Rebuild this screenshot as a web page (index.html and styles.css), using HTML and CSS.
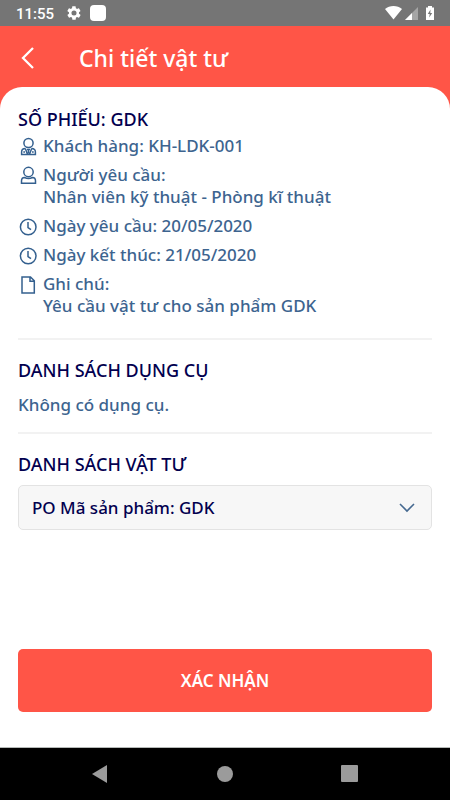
FILE: index.html
```html
<!DOCTYPE html>
<html lang="vi">
<head>
<meta charset="utf-8">
<meta name="viewport" content="width=device-width, initial-scale=1">
<title>Chi tiết vật tư</title>
<link rel="stylesheet" href="styles.css">
</head>
<body>
<div class="statusbar">
  <span class="clock">11:55</span>
  <svg class="gear" viewBox="0 0 24 24" width="16" height="16"><path fill="#fff" d="M19.4 13c0-.3.1-.6.1-1s0-.7-.1-1l2.1-1.700c.2-.1.2-.4.1-.6l-2-3.500c-.1-.2-.4-.3-.6-.2l-2.500 1c-.5-.4-1.100-.7-1.700-1l-.4-2.600c0-.3-.2-.4-.5-.4h-4c-.3 0-.5.2-.5.4l-.4 2.600c-.6.3-1.200.6-1.700 1l-2.500-1c-.2-.1-.5 0-.6.2l-2 3.500c-.1.2-.1.5.1.6L4.500 11c0 .3-.1.600-.1 1s0 .7.1 1l-2.100 1.700c-.2.1-.2.4-.1.600l2 3.500c.1.2.4.3.600.2l2.500-1c.5.4 1.100.7 1.700 1l.4 2.600c0 .2.200.4.5.4h4c.3 0 .5-.2.5-.4l.4-2.600c.6-.3 1.200-.6 1.700-1l2.500 1c.2.100.5 0 .6-.2l2-3.500c.1-.2.100-.5-.1-.6zM12 15.800a3.800 3.800 0 1 1 0-7.600 3.800 3.800 0 0 1 0 7.600z"/></svg>
  <span class="chip"></span>
  <svg class="signals" viewBox="0 0 50 16" width="50" height="16">
    <path fill="#fff" d="M0 4C4.500 0 12.500 0 17 4L8.500 14.500z"/>
    <path fill="#a5a5a5" d="M33 2v13H20z"/><path fill="#fff" d="M27 8v7h-7z"/>
    <path fill="#fff" d="M41 2.500h2V1h4v1.500h2V15h-8z"/><path fill="#757575" d="M45.500 4.500 42.800 9h1.900l-.5 3.500L47.200 8h-1.900z"/>
  </svg>
</div>
<header class="appbar">
  <button class="back" type="button" aria-label="Quay lại"><svg viewBox="0 0 14 22" width="14" height="22"><path d="M12 1 2 11l10 10" fill="none" stroke="#fff" stroke-width="2.300"/></svg></button>
  <h1>Chi tiết vật tư</h1>
</header>
<main class="sheet">
  <section class="info">
    <h2>SỐ PHIẾU: GDK</h2>
    <ul>
      <li><svg class="icon" viewBox="0 0 20 20"><circle cx="10.500" cy="7" r="4.600"/><path d="M7.300 12.500C4.800 12.500 3.600 14.300 3.600 16V18.500H17.400V16C17.400 14.300 16.200 12.500 13.700 12.500M7.300 12.500l2.200 5.700M13.700 12.500l-2.200 5.700M9 13.500h3M10.500 13.500v4M5.300 16h1.700M14 16h1.700"/></svg><span>Khách hàng: KH-LDK-001</span></li>
      <li><svg class="icon" viewBox="0 0 20 20"><circle cx="10.500" cy="7" r="4.700"/><path d="M6.500 12.500C4.500 12.500 3.500 14 3.500 16V18.300H17.500V16C17.500 14 16.500 12.500 14.500 12.500C12 13.700 9 13.700 6.500 12.500z"/></svg><span>Người yêu cầu:<br>Nhân viên kỹ thuật - Phòng kĩ thuật</span></li>
      <li><svg class="icon" viewBox="0 0 20 20"><circle cx="10.200" cy="11" r="7.800"/><path d="M10 6v5.500l3 2.200"/></svg><span>Ngày yêu cầu: 20/05/2020</span></li>
      <li><svg class="icon" viewBox="0 0 20 20"><circle cx="10.200" cy="11" r="7.800"/><path d="M10 6v5.500l3 2.200"/></svg><span>Ngày kết thúc: 21/05/2020</span></li>
      <li><svg class="icon" viewBox="0 0 20 20"><path d="M4 3h8.500L16.300 6.800V19H4zM12 3v4.300h4.300"/></svg><span>Ghi chú:<br>Yêu cầu vật tư cho sản phẩm GDK</span></li>
    </ul>
  </section>
  <section class="tools">
    <h2>DANH SÁCH DỤNG CỤ</h2>
    <p>Không có dụng cụ.</p>
  </section>
  <section class="supplies">
    <h2><label for="supply">DANH SÁCH VẬT TƯ</label></h2>
    <div class="picker">
      <select id="supply"><option>PO Mã sản phẩm: GDK</option></select>
      <svg class="chevron" viewBox="0 0 16 10" width="16" height="10"><path d="M1 1l7 7 7-7" fill="none" stroke="#456990" stroke-width="1.600"/></svg>
    </div>
  </section>
  <button class="confirm" type="button">XÁC NHẬN</button>
</main>
<nav class="navbar">
  <button type="button" aria-label="Trở về"><svg viewBox="0 0 18 18" width="18" height="18"><path d="M0 9 15 0v18z"/></svg></button>
  <button type="button" aria-label="Màn hình chính"><svg viewBox="0 0 18 18" width="18" height="18"><circle cx="9" cy="9" r="8"/></svg></button>
  <button type="button" aria-label="Gần đây"><svg viewBox="0 0 18 18" width="18" height="18"><rect x="1" width="17" height="17" rx="1"/></svg></button>
</nav>
</body>
</html>
```
FILE: styles.css
```css
* { box-sizing: border-box; }
body {
  margin: 0;
  min-height: 100vh;
  display: flex;
  flex-direction: column;
  background: #ff5547;
  color: #3d648f;
  font: 500 17px/22px "Noto Sans", sans-serif;
}
h1, h2, p, ul { margin: 0; padding: 0; }
button { border: 0; padding: 0; background: none; font: inherit; color: inherit; }
svg { display: block; flex: none; }

.statusbar {
  display: flex;
  align-items: center;
  height: 26px;
  padding: 0 15px 0 16px;
  background: #757575;
  color: #fff;
}
.clock { padding-top: 2px; font: 500 15px/24px Roboto, sans-serif; }
.gear { margin-left: 12px; }
.chip { width: 16px; height: 16px; margin-left: 8px; border-radius: 4px; background: #fff; }
.signals { margin-left: auto; }

.appbar {
  display: flex;
  align-items: center;
  gap: 44px;
  height: 61px;
  padding: 2px 21px 0;
  color: #fff;
}
.appbar h1 { font-size: 23px; font-weight: 500; line-height: 32px; }

.sheet {
  flex: 1;
  display: flex;
  flex-direction: column;
  padding: 20px 18px 35px;
  border-radius: 22px 22px 0 0;
  background: #fff;
}
h2 { color: #02004f; font-size: 18px; font-weight: 500; line-height: 24px; }

.info { padding-bottom: 21px; }
.info ul { display: flex; flex-direction: column; gap: 7px; margin-top: 4px; list-style: none; }
.info li { display: flex; gap: 5px; }
.icon {
  width: 20px;
  height: 20px;
  margin-top: 1px;
  fill: none;
  stroke: #34608f;
  stroke-width: 1.5;
}

.tools, .supplies { border-top: 2px solid #f2f2f2; padding-top: 18px; }
.tools { padding-bottom: 16px; }
.tools p { margin-top: 12px; }

.picker { position: relative; margin-top: 9px; }
.picker select {
  display: block;
  width: 100%;
  height: 45px;
  padding: 0 44px 0 13px;
  appearance: none;
  border: 1px solid #e3e3e3;
  border-radius: 5px;
  background: #f7f7f7;
  color: #02004f;
  font: 500 17px/22px "Noto Sans", sans-serif;
}
.chevron { position: absolute; top: 18px; right: 17px; pointer-events: none; }

.confirm {
  height: 63px;
  margin-top: auto;
  border-radius: 5px;
  background: #ff5547;
  color: #fff;
  font-weight: 600;
}

.navbar {
  display: flex;
  justify-content: center;
  gap: 106px;
  height: 53px;
  border-top: 1px solid #b5b9b7;
  background: #000;
}
.navbar svg { fill: #9b9b9b; }
```
